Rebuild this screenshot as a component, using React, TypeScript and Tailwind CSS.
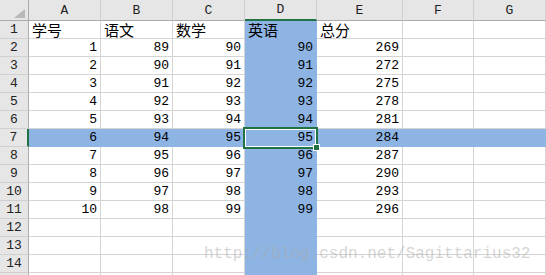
import React from "react";

const cols = [
  { k: "A", w: "w-[72px]" },
  { k: "B", w: "w-[72px]" },
  { k: "C", w: "w-[72px]" },
  { k: "D", w: "w-[72px]" },
  { k: "E", w: "w-[86px]" },
  { k: "F", w: "w-[71px]" },
  { k: "G", w: "w-[72px]" },
];

const data: (string | number)[][] = [
  ["学号", "语文", "数学", "英语", "总分", "", ""],
  [1, 89, 90, 90, 269, "", ""],
  [2, 90, 91, 91, 272, "", ""],
  [3, 91, 92, 92, 275, "", ""],
  [4, 92, 93, 93, 278, "", ""],
  [5, 93, 94, 94, 281, "", ""],
  [6, 94, 95, 95, 284, "", ""],
  [7, 95, 96, 96, 287, "", ""],
  [8, 96, 97, 97, 290, "", ""],
  [9, 97, 98, 98, 293, "", ""],
  [10, 98, 99, 99, 296, "", ""],
  ["", "", "", "", "", "", ""],
  ["", "", "", "", "", "", ""],
  ["", "", "", "", "", "", ""],
  ["", "", "", "", "", "", ""],
];

const mono = { fontFamily: '"Liberation Mono", "Noto Sans CJK SC", monospace' };

export default function App() {
  return (
    <div className="relative w-[546px] h-[275px] overflow-hidden bg-white text-black" style={mono}>
      {/* header row */}
      <div className="flex h-[21px]">
        <div className="relative w-[29px] h-full shrink-0 bg-[#e6e6e6] border-r border-b border-[#ababab]">
          <svg className="absolute left-[14px] top-[9px]" width="11" height="9" viewBox="0 0 11 9">
            <polygon points="11,0 11,9 0,9" fill="#b8b8b8" />
          </svg>
        </div>
        {cols.map((c) => (
          <div
            key={c.k}
            className={`${c.w} shrink-0 h-full bg-[#e6e6e6] border-r border-r-[#d0d0d0] flex items-end justify-center pb-[1px] text-[13px] leading-[16px] text-[#222] ${
              c.k === "D" ? "border-b-2 border-b-[#217346]" : "border-b border-b-[#ababab]"
            }`}
          >
            {c.k}
          </div>
        ))}
      </div>
      {data.map((row, ri) => {
        const rn = ri + 1;
        const rowSel = rn === 7;
        return (
          <div key={ri} className="flex h-[18px]">
            <div
              className={`w-[29px] shrink-0 h-full bg-[#e6e6e6] border-b border-b-[#d0d0d0] flex items-end justify-center text-[13px] leading-[16px] text-[#222] ${
                rowSel ? "border-r-2 border-r-[#217346]" : "border-r border-r-[#ababab]"
              }`}
            >
              {rn <= 14 ? rn : ""}
            </div>
            {row.map((v, ci) => {
              const colSel = ci === 3;
              const hl = rowSel || colSel;
              const isText = typeof v === "string" && v !== "";
              return (
                <div
                  key={ci}
                  className={`${cols[ci].w} shrink-0 h-full border-r border-b flex items-end px-[3px] whitespace-nowrap ${
                    hl ? "bg-[#8db4e2] border-[#8db4e2]" : "bg-white border-[#d4d4d4]"
                  } ${isText ? "justify-start text-[15px] leading-[17px]" : "justify-end text-[13px] leading-[16px]"}`}
                  style={isText ? { fontFamily: '"Noto Sans CJK SC", sans-serif' } : undefined}
                >
                  {v}
                </div>
              );
            })}
          </div>
        );
      })}
      {/* selected cell D7 */}
      <div className="absolute left-[243px] top-[127px] w-[75px] h-[22px] border-2 border-[#217346]">
        <div className="w-full h-full border border-white" />
      </div>
      <div className="absolute left-[313px] top-[144px] w-[7px] h-[7px] bg-[#217346] border border-white" />
      {/* watermark */}
      <div
        className="absolute left-[204px] top-[245px] text-[16px] leading-[18px] text-[rgba(170,170,170,0.5)] whitespace-nowrap"
        style={mono}
      >
        http://blog.csdn.net/Sagittarius32
      </div>
    </div>
  );
}
